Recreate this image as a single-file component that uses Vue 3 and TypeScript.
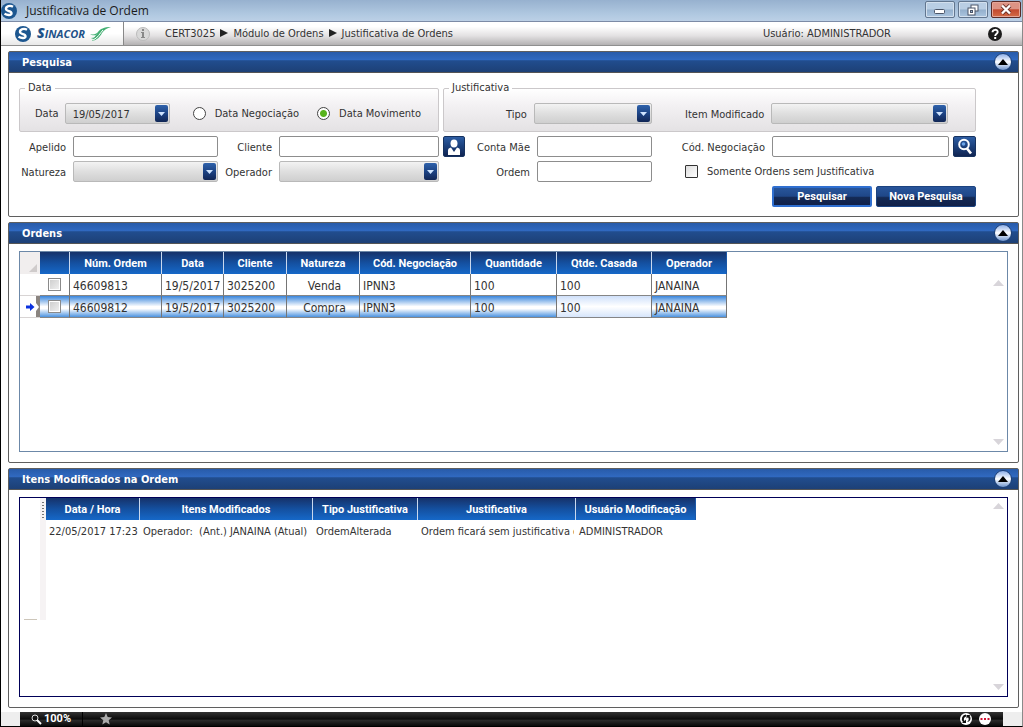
<script setup lang="ts">
import { ref } from 'vue'

interface Order {
  id: string
  date: string
  client: string
  side: string
  code: string
  quantity: number
  matched: number
  operator: string
  checked: boolean
}

interface Change {
  time: string
  items: string
  kind: string
  reason: string
  user: string
}

const dateMode = ref('movimento')
const onlyMissing = ref(false)
const current = ref('46609812')

const orders = ref<Order[]>([
  { id: '46609813', date: '19/5/2017', client: '3025200', side: 'Venda', code: 'IPNN3', quantity: 100, matched: 100, operator: 'JANAINA', checked: false },
  { id: '46609812', date: '19/5/2017', client: '3025200', side: 'Compra', code: 'IPNN3', quantity: 100, matched: 100, operator: 'JANAINA', checked: false },
])

const changes: Change[] = [
  { time: '22/05/2017 17:23', items: 'Operador:\u00a0 (Ant.) JANAINA (Atual)', kind: 'OrdemAlterada', reason: 'Ordem ficará sem justificativa d', user: 'ADMINISTRADOR' },
]

const orderHeads = ['Núm. Ordem', 'Data', 'Cliente', 'Natureza', 'Cód. Negociação', 'Quantidade', 'Qtde. Casada', 'Operador']
const changeHeads = ['Data / Hora', 'Itens Modificados', 'Tipo Justificativa', 'Justificativa', 'Usuário Modificação']
</script>

<template>
  <div class="window">
    <header class="titlebar">
      <svg class="ball" viewBox="0 0 16 16" aria-hidden="true">
        <circle cx="8" cy="8" r="8" fill="#1d5790" />
        <path d="M12 3.800C9 2 4.800 3.200 5 6c.2 2.500 5.500 1.800 5.500 4.200 0 2.200-3.800 2.300-7 .6" fill="none" stroke="#fff" stroke-width="2.400" />
      </svg>
      <h1>Justificativa de Ordem</h1>
      <div class="wbtns">
        <button type="button" aria-label="Minimizar">
          <svg width="14" height="10" viewBox="0 0 14 10"><rect x="1.500" y="4.500" width="10" height="4" rx="1" fill="#fff" stroke="#4a5568" /></svg>
        </button>
        <button type="button" aria-label="Restaurar">
          <svg width="14" height="12" viewBox="0 0 14 12"><rect x="5" y="1" width="7" height="6" fill="#fff" stroke="#4a5568" /><rect x="2" y="4" width="7" height="7" fill="#fff" stroke="#4a5568" /><rect x="4.500" y="6.500" width="2" height="2" fill="#9db9d8" stroke="#4a5568" /></svg>
        </button>
        <button type="button" class="close" aria-label="Fechar">
          <svg width="14" height="11" viewBox="0 0 14 11"><path d="M3 1.500l8 8M11 1.500l-8 8" stroke="#6b3028" stroke-width="4" /><path d="M3 1.500l8 8M11 1.500l-8 8" stroke="#fff" stroke-width="2.400" /></svg>
        </button>
      </div>
    </header>

    <nav class="toolbar">
      <div class="brand">
        <svg class="ball" viewBox="0 0 16 16" aria-hidden="true">
          <circle cx="8" cy="8" r="8" fill="#1d5790" />
          <path d="M12 3.800C9 2 4.800 3.200 5 6c.2 2.500 5.500 1.800 5.500 4.200 0 2.200-3.800 2.300-7 .6" fill="none" stroke="#fff" stroke-width="2.400" />
        </svg>
        <span class="word"><b>S</b>INACOR</span>
        <svg class="wing" viewBox="0 0 21 16" aria-hidden="true">
          <path d="M21 1C14 1 10 3 8 6L2 15c5-1 8-4 10-8 2-3 5-5 9-6z" fill="#45b074" />
          <path d="M0 8c4 1 6 0 8-2L6 9C4 9.500 2 9.500 0 8zM1 12c3 0 5-1 7-3l-2 4c-2 .5-3 0-5-1z" fill="#45b074" />
          <path d="M3 14C8 12 10 7 13 4" fill="none" stroke="#fff" />
        </svg>
      </div>
      <svg class="info" viewBox="0 0 14 14" aria-hidden="true">
        <circle cx="7" cy="7" r="6.500" fill="#d9d9d9" stroke="#bbb" />
        <rect x="6" y="2" width="2" height="2" fill="#888" /><path d="M5 5h3v5h1v1H5v-1h1V6H5z" fill="#888" />
      </svg>
      <ol class="crumbs">
        <li>CERT3025</li>
        <li>Módulo de Ordens</li>
        <li>Justificativa de Ordens</li>
      </ol>
      <span class="user">Usuário: ADMINISTRADOR</span>
      <button type="button" class="help" aria-label="Ajuda">
        <svg width="14" height="14" viewBox="0 0 14 14"><circle cx="7" cy="7" r="7" fill="#1c1c1c" /><path d="M4.500 5.300c0-3.300 5.200-3.200 5.200-.3C9.700 6.800 7.200 6.700 7.200 9" fill="none" stroke="#fff" stroke-width="1.900" /><rect x="6.200" y="10" width="2" height="2" fill="#fff" /></svg>
      </button>
    </nav>

    <main>
      <section class="panel">
        <header class="bar">
          <h2>Pesquisa</h2>
          <button type="button" class="fold" aria-label="Recolher Pesquisa"><svg width="12" height="6" viewBox="0 0 12 6"><path d="M6 0l5 6H1z" /></svg></button>
        </header>
        <form class="search" @submit.prevent>
          <fieldset class="dates">
            <legend>Data</legend>
            <div class="daterow">
              <label for="data">Data</label>
              <span class="combo date">
                <select id="data"><option>19/05/2017</option></select>
                <svg viewBox="0 0 13 17" aria-hidden="true"><path d="M3 7h7l-3.500 4z" /></svg>
              </span>
              <label class="pick"><input v-model="dateMode" type="radio" name="modo" value="negociacao" />Data Negociação</label>
              <label class="pick"><input v-model="dateMode" type="radio" name="modo" value="movimento" />Data Movimento</label>
            </div>
          </fieldset>
          <fieldset class="reasons">
            <legend>Justificativa</legend>
            <div class="reasonrow">
              <label for="tipo">Tipo</label>
              <span class="combo">
                <select id="tipo"><option></option></select>
                <svg viewBox="0 0 13 17" aria-hidden="true"><path d="M3 7h7l-3.500 4z" /></svg>
              </span>
              <label for="item">Item Modificado</label>
              <span class="combo">
                <select id="item"><option></option></select>
                <svg viewBox="0 0 13 17" aria-hidden="true"><path d="M3 7h7l-3.500 4z" /></svg>
              </span>
            </div>
          </fieldset>

          <label class="c1" for="apelido">Apelido</label>
          <input id="apelido" class="c2" type="text" />
          <label class="c3" for="cliente">Cliente</label>
          <input id="cliente" class="c4" type="text" />
          <button type="button" class="tool c6" aria-label="Buscar cliente">
            <svg width="16" height="18" viewBox="0 0 16 18"><ellipse cx="8" cy="5.500" rx="3.500" ry="4" fill="#fff" /><path d="M2 17v-4.500Q2 10 5 9.500l3 4.500 3-4.500q3 .5 3 3V17z" fill="#fff" /></svg>
          </button>
          <label class="c7" for="conta">Conta Mãe</label>
          <input id="conta" class="c8" type="text" />
          <label class="c9" for="codigo">Cód. Negociação</label>
          <input id="codigo" class="c10" type="text" />
          <button type="button" class="tool lens c11" aria-label="Buscar código">
            <svg width="16" height="17" viewBox="0 0 16 17"><circle cx="7" cy="6.500" r="4.800" fill="none" stroke="#fff" stroke-width="2" /><path d="M10 10.500l4 5" stroke="#fff" stroke-width="2.700" /><circle cx="6.500" cy="6" r="1.800" fill="#6ba3e6" /></svg>
          </button>

          <label class="c1" for="natureza">Natureza</label>
          <span class="combo c2">
            <select id="natureza"><option></option></select>
            <svg viewBox="0 0 13 17" aria-hidden="true"><path d="M3 7h7l-3.500 4z" /></svg>
          </span>
          <label class="c3" for="operador">Operador</label>
          <span class="combo c4">
            <select id="operador"><option></option></select>
            <svg viewBox="0 0 13 17" aria-hidden="true"><path d="M3 7h7l-3.500 4z" /></svg>
          </span>
          <label class="c7" for="ordem">Ordem</label>
          <input id="ordem" class="c8" type="text" />
          <label class="only"><input v-model="onlyMissing" type="checkbox" />Somente Ordens sem Justificativa</label>

          <div class="actions">
            <button type="submit" class="primary">Pesquisar</button>
            <button type="reset">Nova Pesquisa</button>
          </div>
        </form>
      </section>

      <section class="panel grow">
        <header class="bar">
          <h2>Ordens</h2>
          <button type="button" class="fold" aria-label="Recolher Ordens"><svg width="12" height="6" viewBox="0 0 12 6"><path d="M6 0l5 6H1z" /></svg></button>
        </header>
        <div class="gridbox">
          <table class="orders">
            <colgroup>
              <col class="w20" /><col class="w30" /><col class="w92" /><col class="w62" /><col class="w63" /><col class="w73" /><col class="w111" /><col class="w86" /><col class="w95" /><col class="w75" />
            </colgroup>
            <thead>
              <tr>
                <th class="corner"><svg width="8" height="8" viewBox="0 0 8 8"><path d="M8 0v8H0z" fill="#cfcbcb" /></svg></th>
                <th></th>
                <th v-for="h in orderHeads" :key="h">{{ h }}</th>
              </tr>
            </thead>
            <tbody>
              <tr v-for="o in orders" :key="o.id" :class="{ current: o.id === current }" @click="current = o.id">
                <td class="mark">
                  <svg v-if="o.id === current" width="16" height="21" viewBox="0 0 16 21"><rect x="12" width="4" height="21" fill="#8a8480" /><path d="M12 7l3 4-3 4z" fill="#fff" /><path d="M2 9.500h4V7l4.500 4L6 15v-2.500H2z" fill="#0a32e0" /></svg>
                </td>
                <td class="tick"><input v-model="o.checked" type="checkbox" :aria-label="'Selecionar ordem ' + o.id" /></td>
                <td>{{ o.id }}</td>
                <td>{{ o.date }}</td>
                <td>{{ o.client }}</td>
                <td class="mid">{{ o.side }}</td>
                <td>{{ o.code }}</td>
                <td>{{ o.quantity }}</td>
                <td class="focus">{{ o.matched }}</td>
                <td>{{ o.operator }}</td>
              </tr>
            </tbody>
          </table>
          <div class="scroll first" aria-hidden="true">
            <svg width="11" height="6" viewBox="0 0 11 6"><path d="M5.500 0L11 6H0z" /></svg>
            <svg width="11" height="6" viewBox="0 0 11 6"><path d="M0 0h11L5.500 6z" /></svg>
          </div>
        </div>
      </section>

      <section class="panel grow">
        <header class="bar">
          <h2>Itens Modificados na Ordem</h2>
          <button type="button" class="fold" aria-label="Recolher Itens"><svg width="12" height="6" viewBox="0 0 12 6"><path d="M6 0l5 6H1z" /></svg></button>
        </header>
        <div class="gridbox navy">
          <div class="gutter"><i></i></div>
          <table class="changes">
            <colgroup>
              <col class="w94" /><col class="w173" /><col class="w105" /><col class="w158" /><col class="w120" />
            </colgroup>
            <thead>
              <tr><th v-for="h in changeHeads" :key="h">{{ h }}</th></tr>
            </thead>
            <tbody>
              <tr v-for="c in changes" :key="c.time">
                <td>{{ c.time }}</td>
                <td>{{ c.items }}</td>
                <td>{{ c.kind }}</td>
                <td><span class="clip">{{ c.reason }}</span></td>
                <td>{{ c.user }}</td>
              </tr>
            </tbody>
          </table>
          <div class="scroll" aria-hidden="true">
            <svg width="11" height="6" viewBox="0 0 11 6"><path d="M5.500 0L11 6H0z" /></svg>
            <svg width="11" height="6" viewBox="0 0 11 6"><path d="M0 0h11L5.500 6z" /></svg>
          </div>
        </div>
      </section>
    </main>

    <footer class="status">
      <div class="strip">
        <span class="zoom">
          <svg width="11" height="11" viewBox="0 0 11 11"><circle cx="4" cy="4" r="3" fill="none" stroke="#ddd" /><path d="M6 6l4 4" stroke="#fff" stroke-width="2" /></svg>
          100%
        </span>
        <svg class="star" width="12" height="12" viewBox="0 0 12 12"><path d="M6 0l1.700 4 4.300.4-3.300 2.800 1 4.300L6 9.300l-3.700 2.200 1-4.300L0 4.400 4.300 4z" fill="#aaa" /></svg>
        <svg class="right" width="12" height="12" viewBox="0 0 12 12"><circle cx="6" cy="6" r="6" fill="#fff" /><path d="M6 1.500A4.500 4.500 0 0 0 3 9l-1 1h4V6.500L4.500 8A2.800 2.800 0 0 1 6 3.500zM6.500 2v3.500L8 4.200c1.300 1.500.8 3.500-1 4.800 3.500-.5 4.500-4 2.500-6l1-1z" fill="#111" /></svg>
        <svg width="12" height="12" viewBox="0 0 12 12"><circle cx="6" cy="6" r="6" fill="#fff" /><path d="M1.500 5h2v2h-2zM5 5h2v2H5zM8.500 5h2v2h-2z" fill="#d01030" /></svg>
      </div>
    </footer>
  </div>
</template>

<style>
body {
  margin: 0;
  background: #fff;
}
</style>

<style scoped>
.window,
.window * {
  box-sizing: border-box;
}
.window {
  display: flex;
  flex-direction: column;
  min-height: 100vh;
  border-left: 1px solid #000;
  border-right: 1px solid #8a8a8a;
  border-bottom: 1px solid #000;
  background: #fff;
  color: #333;
  font: 11px/14px "DejaVu Sans Condensed", "DejaVu Sans", sans-serif;
}
button,
input,
select {
  font: inherit;
  color: inherit;
  margin: 0;
  padding: 0;
}
h1,
h2 {
  margin: 0;
}
svg {
  display: block;
  flex: none;
}

/* Title bar */
.titlebar {
  display: flex;
  align-items: center;
  height: 22px;
  padding-right: 1px;
  border-bottom: 1px solid #7c8ba6;
  background: linear-gradient(#97b1cf, #b1c9e1 70%, #bcd0e6);
}
.ball {
  width: 16px;
  height: 16px;
}
.titlebar h1 {
  flex: 1;
  margin-left: 9px;
  font: 12px/18px "Open Sans", sans-serif;
  color: #1b1b1b;
}
.wbtns {
  display: flex;
  align-self: flex-start;
  gap: 3px;
}
.wbtns button {
  display: flex;
  align-items: center;
  justify-content: center;
  width: 30px;
  height: 17px;
  margin-top: 1px;
  border: 1px solid #62768f;
  border-radius: 2px;
  box-shadow: inset 0 0 0 1px #d3e0ee;
  background: linear-gradient(#b9cee4 48%, #93afcc 52%, #abc5df);
}
.wbtns .close {
  border-color: #5a2a26;
  box-shadow: inset 0 0 0 1px #e5a698;
  background: linear-gradient(#dd9384 45%, #c2492f 52%, #d36c47);
}

/* Toolbar */
.toolbar {
  display: flex;
  align-items: center;
  height: 24px;
  border-bottom: 1px solid #8f8f8f;
  background: linear-gradient(#fff 20%, #e3e1e2 60%, #b3b1b2);
}
.brand {
  display: flex;
  align-items: center;
  align-self: stretch;
  width: 123px;
  padding-left: 14px;
  border-right: 1px solid #888;
  background: linear-gradient(#fff 50%, #e8e8e8);
}
.word {
  margin-left: 6px;
  font: italic bold 11px/16px "Open Sans", sans-serif;
  color: #1e5288;
}
.word b {
  font-size: 14px;
}
.wing {
  width: 21px;
  height: 16px;
  margin-left: 5px;
}
.info {
  width: 14px;
  height: 14px;
  margin-left: 12px;
}
.crumbs {
  display: flex;
  flex: 1;
  margin: 0;
  padding: 0 0 0 15px;
  list-style: none;
  white-space: nowrap;
}
.crumbs li + li::before {
  content: "";
  display: inline-block;
  width: 0;
  margin: 0 5px;
  border: solid transparent;
  border-width: 4px 0 4px 8px;
  border-left-color: #222;
}
.help {
  width: 14px;
  height: 14px;
  margin: 0 20px 0 97px;
  border: 0;
  background: none;
}

/* Panels */
main {
  display: flex;
  flex: 1;
  flex-direction: column;
  gap: 5px;
  padding: 5px 3px 4px 7px;
}
.panel {
  display: flex;
  flex-direction: column;
  border: 1px solid #5f5f5f;
  border-radius: 2px;
}
.grow {
  flex: 1 1 0px;
}
.bar {
  display: flex;
  align-items: center;
  justify-content: space-between;
  height: 21px;
  padding: 0 6px 0 13px;
  border-bottom: 1px solid #555;
  background: linear-gradient(#285ba9, #3069c0 38%, #214d8e 44%, #1d4076);
}
.bar h2 {
  padding-top: 2px;
  font-size: 11px;
  line-height: 14px;
  color: #fff;
}
.fold {
  display: flex;
  align-items: center;
  justify-content: center;
  width: 18px;
  height: 18px;
  border: 1px solid #1d4076;
  border-radius: 50%;
  background: linear-gradient(#8fb0e8, #fff 50%, #dfe9f8 60%, #6f94cc);
}
.fold svg {
  fill: #000;
}

/* Search form */
.search {
  display: grid;
  grid-template-columns: 54fr 145fr 61fr 160fr 4fr 22fr 72fr 115fr 120fr 177fr 27fr;
  row-gap: 4px;
  padding: 8px 42px 9px 10px;
}
fieldset {
  min-width: 0;
  margin: 0;
  padding: 0 0 7px;
  border: 1px solid #cbc8ca;
  border-radius: 2px;
  background: linear-gradient(#fff, #f4f2f4 35%, #e4e2e4);
}
legend {
  margin-left: 5px;
  padding: 0 3px;
}
.dates {
  grid-column: 1 / 5;
}
.reasons {
  grid-column: 6 / 12;
}
.daterow {
  display: flex;
  align-items: center;
  padding: 8px 0 0 15px;
}
.daterow .date {
  width: 105px;
  margin-left: 6px;
}
.pick {
  display: flex;
  align-items: center;
  gap: 9px;
  margin-left: 23px;
  white-space: nowrap;
}
.pick + .pick {
  margin-left: 18px;
}
.pick input {
  appearance: none;
  width: 13px;
  height: 13px;
  border: 1px solid #444;
  border-radius: 50%;
  background: #fff;
}
.pick input:checked {
  background: radial-gradient(circle, #58b31c 3px, #fff 4px);
}
.reasonrow {
  display: grid;
  grid-template-columns: 90fr 118fr 120fr 177fr 27fr;
  align-items: center;
  padding-top: 8px;
}
.reasonrow label,
.c1,
.c3,
.c7,
.c9 {
  align-self: center;
  padding: 2px 7px 0 0;
  text-align: right;
  white-space: nowrap;
}
.c1 { grid-column: 1; }
.c2 { grid-column: 2; }
.c3 { grid-column: 3; }
.c4 { grid-column: 4; }
.c6 { grid-column: 6; }
.c7 { grid-column: 7; }
.c8 { grid-column: 8; }
.c9 { grid-column: 9; }
.c10 { grid-column: 10; }
.c11 { grid-column: 11; }
input[type="text"] {
  width: 100%;
  height: 21px;
  padding: 0 4px;
  border: 1px solid #8d8d8d;
  border-radius: 2px;
  background: #fff;
}
.combo {
  position: relative;
  height: 21px;
}
.combo select {
  appearance: none;
  display: block;
  width: 100%;
  height: 21px;
  padding: 2px 18px 0 7px;
  border: 1px solid #b9b9b9;
  border-radius: 2px;
  background: linear-gradient(#f3f3f3, #dfdfdf 50%, #cfcfcf);
}
.combo svg {
  position: absolute;
  top: 2px;
  right: 2px;
  width: 13px;
  height: 17px;
  border-radius: 2px;
  background: linear-gradient(#2f62ab, #1c4384 50%, #112655);
  fill: #cfe4ff;
  pointer-events: none;
}
.tool {
  display: flex;
  align-items: center;
  justify-content: center;
  height: 21px;
  border: 1px solid #16325f;
  border-radius: 2px;
  background: linear-gradient(#2d5da3, #1d4380 45%, #102452);
}
.lens {
  margin-left: 4px;
}
.only {
  display: flex;
  grid-column: 9 / 12;
  align-items: center;
  gap: 9px;
  padding-left: 33px;
  white-space: nowrap;
}
.only input {
  appearance: none;
  width: 13px;
  height: 13px;
  border: 1px solid #333;
  border-radius: 1px;
  background: linear-gradient(135deg, #ddd, #fff);
}
.actions {
  display: flex;
  grid-column: 10 / 12;
  gap: 4px;
}
.actions button {
  flex: 1 1 100px;
  height: 21px;
  border: 1px solid #1c4380;
  border-radius: 2px;
  background: linear-gradient(#28559a, #1f4788 48%, #142a55 56%, #11214a);
  color: #fff;
  font: bold 11px/14px Roboto, sans-serif;
  white-space: nowrap;
}
.actions .primary {
  border: 2px solid #2f6fd0;
}

/* Data grids */
.gridbox {
  display: flex;
  flex: 1;
  align-items: flex-start;
  margin: 7px 10px 10px;
  border: 1px solid #6c88a8;
}
.navy {
  border-color: #000058;
}
table {
  table-layout: fixed;
  border-spacing: 0;
}
.orders {
  width: 707px;
}
.changes {
  width: 650px;
}
.w20 { width: 20px; }
.w30 { width: 30px; }
.w62 { width: 62px; }
.w63 { width: 63px; }
.w73 { width: 73px; }
.w75 { width: 75px; }
.w86 { width: 86px; }
.w92 { width: 92px; }
.w94 { width: 94px; }
.w95 { width: 95px; }
.w105 { width: 105px; }
.w111 { width: 111px; }
.w120 { width: 120px; }
.w158 { width: 158px; }
.w173 { width: 173px; }
th,
td {
  height: 22px;
  padding: 2px 0 0 3px;
  overflow: hidden;
  text-align: left;
  white-space: nowrap;
}
th {
  padding: 2px 0 0;
  border-right: 1px solid #c9d8ee;
  background: linear-gradient(#16326a, #1450a0 50%, #1668c8);
  color: #fff;
  font: bold 11px/14px Roboto, sans-serif;
  text-align: center;
}
.orders th:last-child,
.changes th:last-child {
  border-right-color: #1a58a8;
}
.orders .corner {
  padding: 0 3px 2px 9px;
  border: 0;
  background: #f1eeee;
  vertical-align: bottom;
}
.orders td {
  border-right: 1px solid #757575;
  border-bottom: 1px solid #858585;
  font-size: 12px;
}
.orders .mark {
  padding: 0 0 0 4px;
  border-right: 0;
  border-bottom-color: #d8d4d4;
}
.orders .tick {
  padding: 0 0 0 8px;
}
.tick input {
  appearance: none;
  display: block;
  width: 13px;
  height: 13px;
  border: 1px solid #8a8a8a;
  box-shadow: inset 0 0 0 1px #fff;
  background: linear-gradient(135deg, #ccc, #f2f2f2);
}
.orders .mid {
  text-align: center;
}
.current td {
  background: linear-gradient(#3a86dc, #fff 50%, #fff 60%, #4c93e0);
}
.current .mark {
  background: #fff;
}
.current .focus {
  background: linear-gradient(#cfe0fa, #fff 50%, #d6e5fb);
}
.clip {
  display: block;
  margin-right: 2px;
  overflow: hidden;
}
.gutter {
  display: flex;
  justify-content: flex-end;
  align-items: flex-end;
  width: 26px;
  height: 122px;
  background: linear-gradient(#f6f3f4, #f6f3f4) right / 6px 100% no-repeat;
}
.gutter::before {
  content: "";
  width: 13px;
  height: 1px;
  margin-right: 5px;
  background: #cdc6ba;
}
.gutter i {
  align-self: flex-start;
  width: 2px;
  height: 16px;
  margin: 4px 2px 0 0;
  background: repeating-linear-gradient(#777 0 1px, transparent 1px 3px);
}
.scroll {
  display: flex;
  flex-direction: column;
  align-self: stretch;
  justify-content: space-between;
  margin-left: auto;
  padding: 5px 3px 6px;
}
.scroll.first {
  padding-top: 28px;
}
.scroll svg {
  fill: #d8d5da;
}

/* Status bar */
.status {
  padding: 0 19px;
  background: #eee;
}
.strip {
  display: flex;
  align-items: center;
  gap: 7px;
  height: 14px;
  padding-right: 12px;
  background: linear-gradient(#333, #0c0c0c 50%, #2a2a2a 60%, #0a0a0a);
}
.zoom {
  display: flex;
  align-items: center;
  gap: 2px;
  width: 63px;
  height: 14px;
  padding-left: 11px;
  border-right: 1px solid #000;
  color: #fff;
  font: bold 11px/14px Roboto, sans-serif;
}
.star {
  margin-left: 10px;
}
.right {
  margin-left: auto;
}
</style>
